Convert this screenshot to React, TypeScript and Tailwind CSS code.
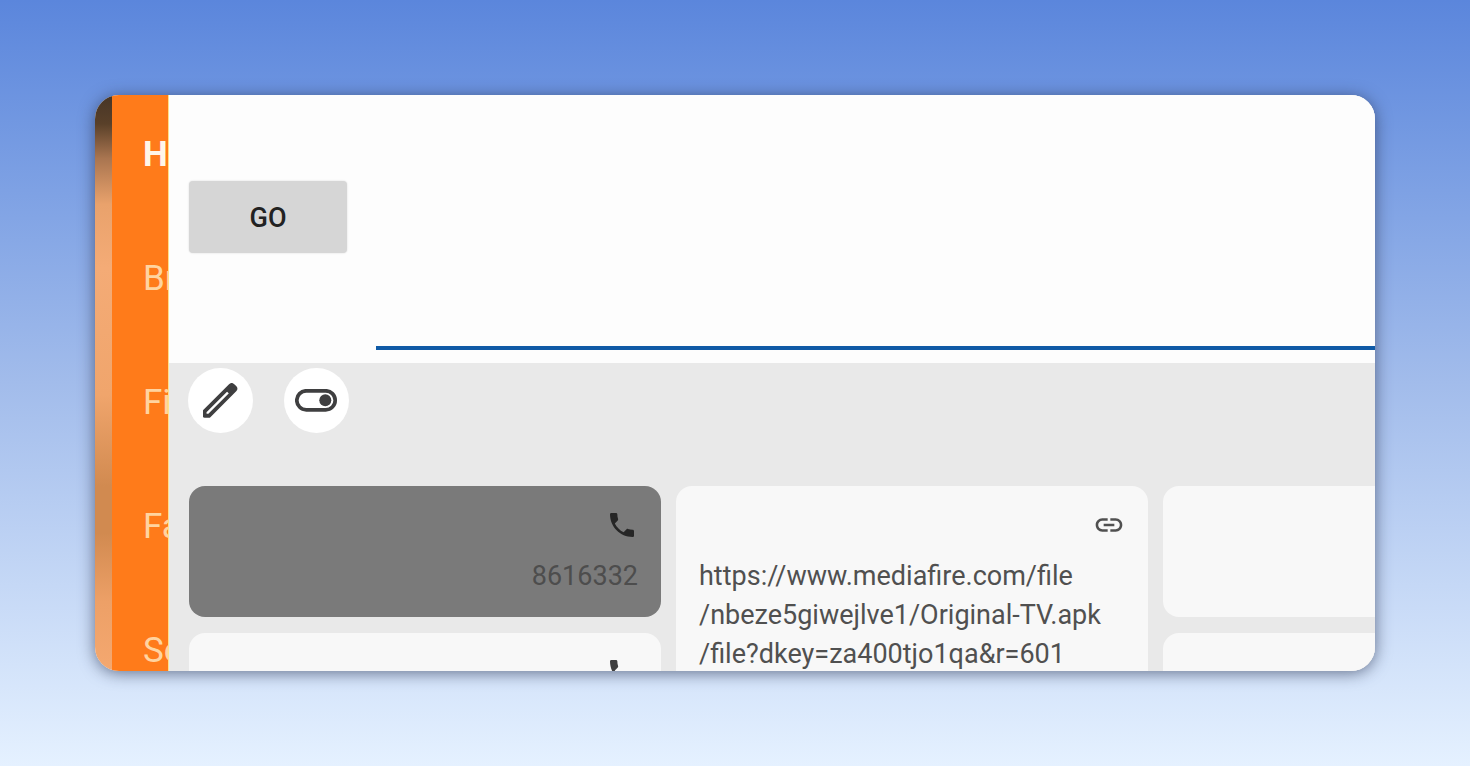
import type { ReactNode } from 'react'
import { MdLink, MdPhone } from 'react-icons/md'

const navItems = [
  { label: 'H', active: true },
  { label: 'Br', active: false },
  { label: 'Fi', active: false },
  { label: 'Fa', active: false },
  { label: 'Se', active: false },
]

function PencilIcon() {
  return (
    <svg viewBox="0 0 36 36" className="w-9 h-9" aria-hidden="true">
      <path
        d="M1.6 32.8V28.4L27.4 2.6a1.8 1.8 0 0 1 2.5 0l1.9 1.9a1.8 1.8 0 0 1 0 2.5L6 32.8Z"
        fill="none"
        stroke="#3f3f40"
        strokeWidth="3.9"
        strokeLinejoin="round"
      />
      <path d="M23.4 6.6 27.4 2.6h3l1.4 1.9V7L27.8 11Z" fill="#3f3f40" stroke="#3f3f40" strokeWidth="2" />
    </svg>
  )
}

function ToggleIcon() {
  return (
    <svg viewBox="0 0 44 24" className="w-11 h-6" aria-hidden="true">
      <rect x="1.8" y="1.8" width="38.4" height="19" rx="9.5" fill="none" stroke="#3f3f40" strokeWidth="3.7" />
      <circle cx="30.3" cy="11.3" r="6" fill="#3f3f40" />
    </svg>
  )
}

function RoundButton({ label, children }: { label: string; children: ReactNode }) {
  return (
    <button
      type="button"
      aria-label={label}
      className="flex items-center justify-center w-[65px] h-[65px] rounded-full bg-white"
    >
      {children}
    </button>
  )
}

function Card({ dark = false, icon, children }: { dark?: boolean; icon?: ReactNode; children?: ReactNode }) {
  return (
    <div
      className={`flex flex-col gap-4 min-h-[131px] px-[23px] pt-[23px] pb-5 rounded-2xl text-[27px] leading-[39px] ${
        dark ? 'bg-[#7a7a7a] text-[#4d4d4d]' : 'bg-[#f8f8f8] text-[#505050]'
      }`}
    >
      {icon && <div className="flex justify-end">{icon}</div>}
      {children}
    </div>
  )
}

export default function App() {
  return (
    <div className="h-screen p-[95px] bg-linear-to-b from-[#5b86dc] via-[#a2bceb] to-[#e5f1ff] font-[Roboto,sans-serif]">
      <div className="flex h-full rounded-[24px] overflow-hidden bg-[#fdfdfd] shadow-[0_2px_16px_rgba(40,50,80,0.65)]">
        {/* Wallpaper edge */}
        <div className="w-[17px] shrink-0 bg-[linear-gradient(to_bottom,#463526_0%,#594029_5%,#a97550_11%,#e9a26c_19%,#f4ab76_30%,#f0a56c_52%,#d18a50_68%,#d18a50_76%,#eda067_88%,#f4a870_100%)]" />

        {/* Side navigation */}
        <nav className="w-[57px] shrink-0 overflow-hidden pl-[31px] bg-[#ff7b1a] border-r border-[#ffe08a]">
          <ul className="flex flex-col -mt-[3px]">
            {navItems.map((item) => (
              <li
                key={item.label}
                className={`flex items-center h-[124px] text-[35px] leading-none whitespace-nowrap ${
                  item.active ? 'font-bold text-[#fff6e8]' : 'text-[#ffd4a0]'
                }`}
              >
                <a href="#">{item.label}</a>
              </li>
            ))}
          </ul>
        </nav>

        <main className="flex flex-col flex-1 min-w-0 overflow-hidden bg-[#e9e9e9]">
          {/* Address bar */}
          <form className="flex shrink-0 gap-[29px] h-[268px] pl-5 bg-[#fdfdfd]">
            <button
              type="button"
              className="w-[158px] h-[72px] mt-[86px] pt-[3px] rounded-[4px] bg-[#d6d6d6] text-[27px] font-medium text-[#222222] shadow-[0_0_2px_rgba(0,0,0,0.15)]"
            >
              GO
            </button>
            <input
              type="text"
              aria-label="Address"
              className="flex-1 min-w-0 h-[255px] border-b-4 border-[#0f5aa6] bg-transparent text-[27px] outline-none"
            />
          </form>

          {/* Actions */}
          <div className="flex shrink-0 gap-[31px] pt-[5px] pl-[19px]">
            <RoundButton label="Edit">
              <PencilIcon />
            </RoundButton>
            <RoundButton label="Toggle">
              <ToggleIcon />
            </RoundButton>
          </div>

          {/* Clips */}
          <div className="grid grid-cols-[repeat(3,472px)] gap-[15px] mt-[53px] pl-5">
            <div className="flex flex-col gap-4">
              <Card dark icon={<MdPhone size={32} color="#262626" />}>
                <p className="text-right">8616332</p>
              </Card>
              <Card icon={<MdPhone size={32} color="#3f3f40" />} />
            </div>
            <div className="flex flex-col gap-4">
              <Card icon={<MdLink size={32} color="#505050" />}>
                <p className="whitespace-nowrap">
                  https://www.mediafire.com/file
                  <br />
                  /nbeze5giwejlve1/Original-TV.apk
                  <br />
                  /file?dkey=za400tjo1qa&amp;r=601
                </p>
              </Card>
            </div>
            <div className="flex flex-col gap-4">
              <Card />
              <Card />
            </div>
          </div>
        </main>
      </div>
    </div>
  )
}
